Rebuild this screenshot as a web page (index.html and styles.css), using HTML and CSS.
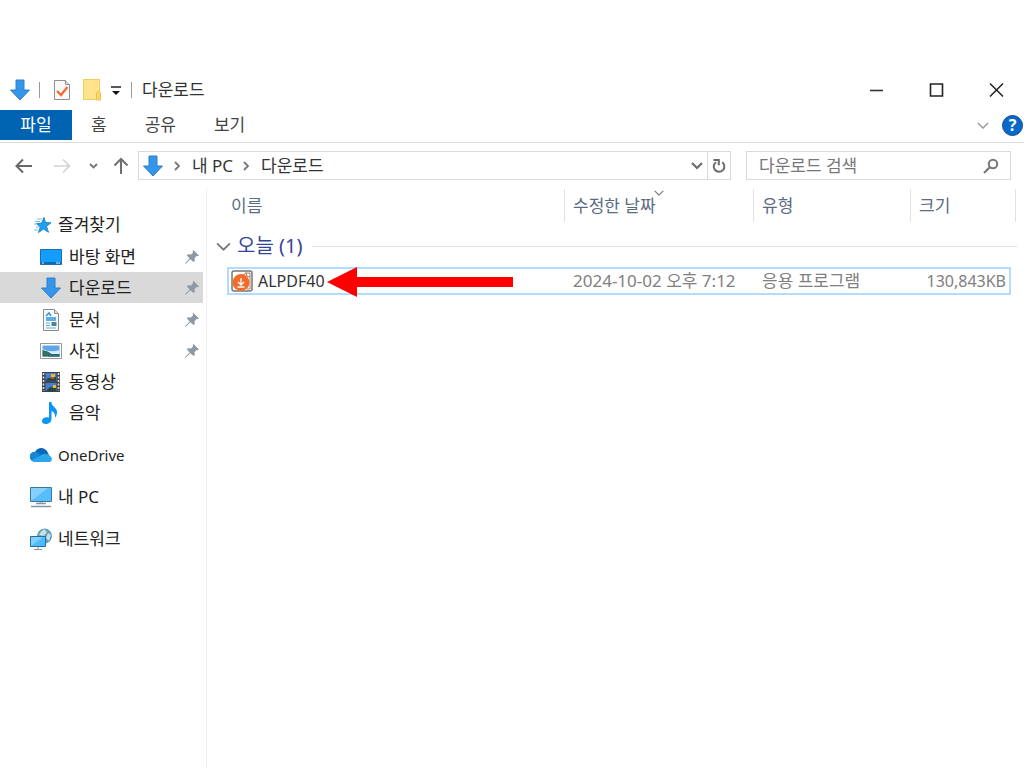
FILE: index.html
```html
<!DOCTYPE html>
<html lang="ko">
<head>
<meta charset="utf-8">
<meta name="viewport" content="width=device-width, initial-scale=1">
<title>다운로드</title>
<link rel="stylesheet" href="styles.css">
</head>
<body>
<svg class="defs" width="0" height="0" aria-hidden="true">
  <symbol id="down" viewBox="0 0 22 22"><path d="M7 1h8v10h5.500L11 21 1.500 11H7z" fill="#3595e8" stroke="#2b80cf"/></symbol>
  <symbol id="pin" viewBox="0 0 14 14"><path d="M8.500 0 14 5.500l-1.500.8-1-.3-2 2.200.3 2.800L8.600 12 5.300 9.200 1 13.500 0 14l.5-1.200L4.600 8.500 1.800 5.300l1.200-1 2.900.2L8 2.500 7.700 1z" fill="#8e99a3"/></symbol>
  <symbol id="chev" viewBox="0 0 14 8"><path d="m1 1 6 6 6-6" fill="none" stroke="currentColor" stroke-width="1.600"/></symbol>
  <symbol id="gt" viewBox="0 0 6 10"><path d="m1 1 4 4-4 4" fill="none" stroke="#777" stroke-width="1.800"/></symbol>
</svg>
<div class="window">
  <header class="titlebar">
    <svg class="i22" viewBox="0 0 22 22"><use href="#down"/></svg>
    <span class="bar"></span>
    <button class="plain props" aria-label="속성"><svg width="18" height="22" viewBox="0 0 18 22"><path d="M1.500 1.500h11l4 4v15h-15z" fill="#f8f8f8" stroke="#909090"/><path d="M12.500 1.500v4h4" fill="#ddd" stroke="#909090"/><path d="m4 12 4 4 6.500-8" fill="none" stroke="#f26a2e" stroke-width="2.200"/></svg></button>
    <button class="plain folder" aria-label="새 폴더"><svg width="18" height="22" viewBox="0 0 18 22"><path d="M.5.5h16v20H.5z" fill="#ffe38d" stroke="#f0cc62"/><path d="M13.500 21V14l1.500-1.500h1.500l1 1.500v7z" fill="#f9d667" stroke="#ebc24c"/></svg></button>
    <button class="plain" aria-label="빠른 실행 사용자 지정"><svg width="10" height="10" viewBox="0 0 10 10"><path d="M0 2h10" stroke="#222" stroke-width="1.500"/><path d="M1 6h8L5 10z" fill="#111"/></svg></button>
    <span class="bar second"></span>
    <h1>다운로드</h1>
    <div class="controls">
      <button class="plain" aria-label="최소화"><svg width="15" height="15" viewBox="0 0 15 15"><path d="M1 7.500h13" stroke="#333" stroke-width="1.600"/></svg></button>
      <button class="plain" aria-label="최대화"><svg width="15" height="15" viewBox="0 0 15 15"><path d="M1.500 1h12v12h-12z" fill="none" stroke="#222" stroke-width="1.600"/></svg></button>
      <button class="plain" aria-label="닫기"><svg width="15" height="15" viewBox="0 0 15 15"><path d="m1 .5 13 13M14 .5l-13 13" stroke="#222" stroke-width="1.500"/></svg></button>
    </div>
  </header>
  <nav class="ribbon" aria-label="리본">
    <button class="file">파일</button><button class="tab">홈</button><button class="tab">공유</button><button class="tab">보기</button>
    <div class="help">
      <button class="plain" aria-label="리본 확장"><svg class="gray" width="12" height="7" viewBox="0 0 14 8"><use href="#chev"/></svg></button>
      <button class="question" aria-label="도움말">?</button>
    </div>
  </nav>
  <div class="toolbar">
    <div class="history">
      <button class="plain" aria-label="뒤로"><svg width="18" height="16" viewBox="0 0 18 16"><path d="M17 8H2M8 1.500 1.500 8 8 14.500" fill="none" stroke="#686868" stroke-width="2"/></svg></button>
      <button class="plain" aria-label="앞으로"><svg width="18" height="16" viewBox="0 0 18 16"><path d="M1 8h15M10 1.500 16.500 8 10 14.500" fill="none" stroke="#d2d2d2" stroke-width="1.700"/></svg></button>
      <button class="plain" aria-label="최근 위치"><svg width="9" height="6" viewBox="0 0 9 6"><path d="m1 1 3.500 3.500L8 1" fill="none" stroke="#777" stroke-width="1.900"/></svg></button>
      <button class="plain" aria-label="위로"><svg width="16" height="18" viewBox="0 0 16 18"><path d="M8 17V2M1.500 8.500 8 2l6.500 6.500" fill="none" stroke="#707070" stroke-width="2"/></svg></button>
    </div>
    <div class="address">
      <svg class="i22" viewBox="0 0 22 22"><use href="#down"/></svg>
      <svg class="gt" viewBox="0 0 6 10"><use href="#gt"/></svg>
      <a href="#">내 PC</a>
      <svg class="gt" viewBox="0 0 6 10"><use href="#gt"/></svg>
      <a href="#">다운로드</a>
      <button class="plain drop" aria-label="이전 위치"><svg width="12" height="8" viewBox="0 0 12 8"><path d="m1 1 5 5 5-5" fill="none" stroke="#6c6c6c" stroke-width="2.200"/></svg></button>
      <button class="plain refresh" aria-label="새로 고침"><svg width="14" height="16" viewBox="0 0 14 16"><path d="M10.200 4.300A5.300 5.300 0 1 1 4 4.200M1.500 2h5.300v5.200" fill="none" stroke="#6c6c6c" stroke-width="2"/></svg></button>
    </div>
    <form class="search">
      <input type="search" aria-label="다운로드 검색" placeholder="다운로드 검색">
      <button class="plain" type="button" aria-label="검색"><svg width="16" height="16" viewBox="0 0 16 16"><circle cx="10" cy="6" r="4.200" fill="none" stroke="#777" stroke-width="2"/><path d="m7 9-6 6" stroke="#777" stroke-width="2.200"/></svg></button>
    </form>
  </div>
  <div class="content">
    <nav class="tree" aria-label="탐색 창">
      <a class="row root top" href="#"><svg class="i18" viewBox="0 0 18 18"><path d="m10 1.500 1.500 5 5.500.3-4.500 3.500 2 6-5-3.200L4.500 16.500l1.800-5.500L2.500 7.500l5.200-.4z" fill="#1ea0ee" stroke="#2588c8" stroke-width="1"/><path d="M3 3h5M1 5.500h5M0 8h3M2 11h3M0 14h4" stroke="#76bfea" stroke-width="1"/></svg><span>즐겨찾기</span></a>
      <a class="row" href="#"><svg class="i22" viewBox="0 0 22 22"><path d="M.5 3.500h21v15H.5z" fill="#129dff" stroke="#1c6fae"/><path d="M1 17h20" stroke="#155d95" stroke-width="1.600"/><path d="M2 17h2M16 17h4" stroke="#d9f1ff"/></svg><span>바탕 화면</span><svg class="pin" viewBox="0 0 14 14"><use href="#pin"/></svg></a>
      <a class="row selected" href="#"><svg class="i22" viewBox="0 0 22 22"><use href="#down"/></svg><span>다운로드</span><svg class="pin" viewBox="0 0 14 14"><use href="#pin"/></svg></a>
      <a class="row" href="#"><svg class="i22" viewBox="0 0 22 22"><path d="M3.500.5h11l4 4v17h-15z" fill="#fafafa" stroke="#8b8b8b"/><path d="M14.500.5v4h4" fill="#ddd" stroke="#8b8b8b"/><path d="m6 7 3-3 2 3M6 9h10M6 11h10" fill="none" stroke="#2797e1" stroke-width="1.500"/><path d="M6 14h4M6 16.500h4M6 19h10" stroke="#61a9d8"/><path d="M11.500 13h5v4h-5z" fill="#4f8297"/></svg><span>문서</span><svg class="pin" viewBox="0 0 14 14"><use href="#pin"/></svg></a>
      <a class="row" href="#"><svg class="i22" viewBox="0 0 22 22"><path d="M.5 3.500h21v15H.5z" fill="#fff" stroke="#999"/><path d="M2.500 5.500h17v11h-17z" fill="#5fa4ea"/><path d="M2.500 9q8 4 17 1v4h-17z" fill="#d5eef9"/><path d="M2.500 10q6 1 9 4h8v2.500h-17z" fill="#32705f"/><path d="M8 14.500h11.500v2H8z" fill="#2b6687"/></svg><span>사진</span><svg class="pin" viewBox="0 0 14 14"><use href="#pin"/></svg></a>
      <a class="row" href="#"><svg class="i22" viewBox="0 0 22 22"><path d="M2 1h18v20H2z" fill="#404040"/><path d="M3.500 2v18M18.500 2v18" stroke="#ddd" stroke-width="1.600" stroke-dasharray="2 1.500"/><path d="M5.500 2h11v8.500h-11zM5.500 12h11v8h-11z" fill="#447ed7"/><path d="M6 10q1-4 5-3l5-1v4.500H6zM6 20l4-4 6 1v3z" fill="#244a43"/><path d="M11 3h4v3h-4zM13 14h3v3h-3z" fill="#efb929"/><path d="M11 6h3v2h-3z" fill="#d54835"/></svg><span>동영상</span></a>
      <a class="row" href="#"><svg class="i22" viewBox="0 0 22 22"><path d="M9 0h2.500c0 5 6 5 5.500 11-.2 2-1 3.500-2 5 .5-4-1-6-3.500-7v8c0 3-3 5-6 5-2 0-3.500-1.300-3.500-3 0-2.500 3.500-4.200 7-3.500z" fill="#0996f8"/></svg><span>음악</span></a>
      <div class="roots">
        <a class="row root latin" href="#"><svg class="i22" viewBox="0 0 22 22"><path d="M5 18a5 5 0 0 1 0-10 7 7 0 0 1 12-1l2 4 1 7z" fill="#0868b9"/><path d="M3 8q5-1 7 3l-7 6Q0 15 0 12q0-3 3-4z" fill="#1684d9"/><path d="M2 16 11 11q5-3 9 1 2 2 2 3 0 3-4 3H5q-2 0-3-2z" fill="#28a8ea"/></svg><span>OneDrive</span></a>
        <a class="row root" href="#"><svg class="i22" viewBox="0 0 22 22"><path d="M.5 1.500h21v14H.5z" fill="#58bdfb" stroke="#397999"/><path d="m1 15 17-13H1z" fill="#86d0ff"/><path d="M9 16h4v2H9z" fill="#c5d1da"/><path d="M6 17.500h10M1 20.500h20" stroke="#8296a8" stroke-width="1.500"/></svg><span>내 PC</span></a>
        <a class="row root" href="#"><svg class="i22" viewBox="0 0 22 22"><circle cx="14.500" cy="8" r="7.500" fill="#689fb7"/><path d="M14 1q-4 3-5 6l5 1 3-4zM18 5l3 2-2 6-3-3z" fill="#c3e1e7"/><path d="M.5 8.500h15v10H.5z" fill="#4dbaff" stroke="#286f99"/><path d="M1 18V9h12z" fill="#80d0ff"/><path d="M8 19v2M4 21.500h8" stroke="#8296a8"/></svg><span>네트워크</span></a>
      </div>
    </nav>
    <main class="files">
      <table>
        <colgroup><col><col class="date"><col class="type"><col class="size"></colgroup>
        <thead><tr><th>이름</th><th>수정한 날짜<svg class="sort" viewBox="0 0 14 8"><use href="#chev"/></svg></th><th>유형</th><th>크기</th></tr></thead>
        <tbody>
          <tr><td class="groupcell" colspan="4"><button class="group"><svg width="15" height="9" viewBox="0 0 14 8"><use href="#chev"/></svg><span>오늘 (1)</span><i></i></button></td></tr>
          <tr class="file-row"><td><a class="name" href="#"><svg class="i22" viewBox="0 0 22 22"><rect x="1" y="1" width="20" height="20" rx="2" fill="#fff" stroke="#777" stroke-width="1.500"/><path d="M14 3h5v16h-3M12 5l3-2 1 3 3 1" fill="none" stroke="#a0806c"/><circle cx="10" cy="12.500" r="8.500" fill="#f36b2b"/><path d="M10 8v7m-3-3 3 3 3-3M6.500 17h7" fill="none" stroke="#fff" stroke-width="1.300"/></svg>ALPDF40</a></td><td>2024-10-02 오후 7:12</td><td>응용 프로그램</td><td class="num">130,843KB</td></tr>
        </tbody>
      </table>
      <svg class="pointer" viewBox="0 0 186 30" aria-hidden="true"><path d="M0 15 30 0v10h156v10H30v10z" fill="#f00"/></svg>
    </main>
  </div>
</div>
</body>
</html>
```
FILE: styles.css
```css
* { box-sizing: border-box; }
body {
  margin: 0;
  background: #fff;
  color: #333;
  font: 17px/24px "Noto Sans", "Noto Sans CJK KR", sans-serif;
}
a { color: inherit; text-decoration: none; }
button { font: inherit; color: inherit; border: 0; padding: 0; background: none; }
svg { display: block; flex: none; }
.defs { position: absolute; }
.plain { display: flex; align-items: center; justify-content: center; }
.i22 { width: 22px; height: 22px; }
.i18 { width: 18px; height: 18px; }
.window { display: flex; flex-direction: column; min-height: 100vh; padding-top: 70px; }

.titlebar { display: flex; align-items: center; height: 40px; padding: 0 20px 0 9px; }
.bar { width: 1px; height: 16px; margin: 0 13px 0 8px; background: #999; }
.bar.second { margin: 0 10px; }
.folder { margin: 0 10px 0 12px; }
h1 { margin: 0; font-size: 17px; font-weight: 400; }
.controls { display: flex; gap: 45px; margin-left: auto; }

.ribbon { display: flex; height: 33px; padding-bottom: 2px; border-bottom: 1px solid #ddd; }
.file { width: 72px; background: #0063b1; color: #fff; }
.tab { padding: 0 19px; color: #444; }
.help { display: flex; align-items: center; gap: 13px; margin-left: auto; padding-right: 1px; }
.gray { color: #999; }
.question {
  width: 21px; height: 21px; border: 1px solid #124e8b; border-radius: 50%;
  background: #0969ca; color: #fff; font-size: 16px; font-weight: 700; line-height: 18px;
}

.toolbar { display: flex; gap: 9px; height: 46px; padding: 8px 13px 9px 15px; }
.history { display: flex; align-items: center; gap: 20px; }
.history .plain:nth-child(3) { margin: 0 -5px 0 -2px; }
.address { display: flex; flex: 1; align-items: center; padding-left: 3px; border: 1px solid #dadada; }
.gt { width: 6px; height: 10px; margin: 0 12px 0 10px; }
.drop { width: 20px; height: 100%; margin-left: auto; }
.refresh { width: 23px; height: 100%; border-left: 1px solid #dadada; }
.search { display: flex; align-items: center; width: 265px; margin-left: 6px; padding-right: 11px; border: 1px solid #dadada; }
.search input { flex: 1; min-width: 0; height: 100%; padding: 0 12px; border: 0; outline: 0; background: none; font: inherit; color: #333; }
.search input::placeholder { color: #777; opacity: 1; }

.content { display: flex; flex: 1; }
.tree { display: flex; flex: none; flex-direction: column; width: 207px; padding: 20px 3px 0 0; border-right: 1px solid #f0f0f0; }
.row { display: flex; align-items: center; gap: 7px; height: 31px; padding: 0 4px 0 40px; color: #222; }
.row.root { padding-left: 30px; gap: 6px; }
.row.top { margin-bottom: 1px; }
.row.latin { font-size: 15px; }
.root .i18 { margin-left: 4px; }
.row.selected { margin-bottom: 1px; background: #d9d9d9; }
.pin { width: 14px; height: 14px; margin-left: auto; }
.roots { display: flex; flex-direction: column; gap: 11px; margin-top: 11px; }

.files { position: relative; flex: 1; padding: 0 13px 0 20px; }
table { width: 100%; table-layout: fixed; border-spacing: 0; }
.date { width: 189px; }
.type { width: 157px; }
.size { width: 101px; }
th { position: relative; height: 33px; padding: 0 8px; border-left: 1px solid #e2e2e2; color: #5a6c84; font-weight: 400; text-align: left; }
th:first-child { padding-left: 4px; border-left: 0; }
th:last-child::after { content: ""; position: absolute; top: 0; right: -5px; width: 1px; height: 100%; background: #e2e2e2; }
.sort { position: absolute; top: 1px; left: 89px; width: 10px; height: 6px; color: #777; }
.groupcell { height: 45px; padding: 3px 0 0; }
.group { display: flex; align-items: center; gap: 6px; width: 100%; margin-left: -11px; color: #777; font-size: 20px; }
.group span { color: #35459c; }
.group i { flex: 1; height: 1px; margin: 0 -17px 0 4px; background: #e2e2e2; }
.file-row { outline: 2px solid #b3dcfc; outline-offset: -2px; }
.file-row td { height: 28px; padding: 0 9px; color: #808080; white-space: nowrap; }
.file-row td:first-child { padding-left: 4px; color: #333; }
.name { display: flex; align-items: center; gap: 5px; font-size: 16px; }
.file-row .num { padding-right: 5px; font-size: 16px; text-align: right; }
.pointer { position: absolute; top: 78px; left: 120px; width: 186px; height: 30px; }
```
